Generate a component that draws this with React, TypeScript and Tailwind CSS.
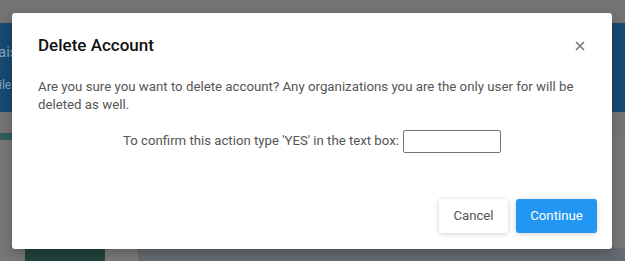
import React from "react";

export default function App() {
    return (
        <div className="relative h-[261px] w-[625px] overflow-hidden bg-[#777777] font-['Roboto',sans-serif]">
            {/* dimmed page behind the dialog */}
            <div className="flex h-full flex-col">
                <div className="h-[23px] bg-[#747474]" />
                <div className="flex h-[89px] flex-col justify-center gap-3 bg-[#164a73] text-[15px] text-[#8fa6bb]">
                    <span className="-ml-[2px]">ais</span>
                    <span className="-ml-[1px] text-[12px]">ile</span>
                </div>
                <div className="h-[21px] bg-[#757575]" />
                <div className="h-[7px] w-[40px] bg-[#2f5d58]" />
                <div className="flex flex-1 items-end">
                    <div className="ml-[25px] h-[13px] w-[80px] bg-[#22433d]" />
                    <div className="h-[13px] w-[33px] bg-[#7a7a7a]" />
                    <div className="h-[13px] flex-1 bg-[#646b70]" />
                </div>
            </div>

            {/* dialog */}
            <div className="absolute left-[12px] top-[13px] flex h-[236px] w-[600px] flex-col rounded-[3px] bg-white shadow-[0_4px_12px_rgba(0,0,0,0.25)]">
                <div className="flex items-center justify-between pl-[26px] pr-[27px] pt-[20px]">
                    <h2 className="text-[17px] font-medium text-[#111]">Delete Account</h2>
                    <svg width="10" height="10" viewBox="0 0 10 10" className="text-[#777]">
                        <path d="M1 1L9 9M9 1L1 9" stroke="currentColor" strokeWidth="1.6" />
                    </svg>
                </div>
                <p className="mt-[19px] px-[26px] text-[13.25px] leading-[18px] text-[#555]">
                    Are you sure you want to delete account? Any organizations you are the only user for will be deleted as well.
                </p>
                <div className="mt-[16px] flex items-center justify-center gap-[4px] text-[13.2px] text-[#555]">
                    <span>To confirm this action type 'YES' in the text box:</span>
                    <input className="h-[23px] w-[98px] rounded-[2px] border border-[#767676] outline-none" />
                </div>
                <div className="mt-auto flex justify-end gap-[8px] pb-[16px] pr-[15px]">
                    <button className="h-[34px] w-[69px] rounded-[3px] bg-white text-[13.2px] text-[#555] shadow-[0_1px_5px_rgba(0,0,0,0.2)]">
                        Cancel
                    </button>
                    <button className="h-[34px] w-[81px] rounded-[3px] bg-[#2196f3] text-[13.2px] text-white shadow-[0_1px_5px_rgba(0,0,0,0.2)]">
                        Continue
                    </button>
                </div>
            </div>
        </div>
    );
}
